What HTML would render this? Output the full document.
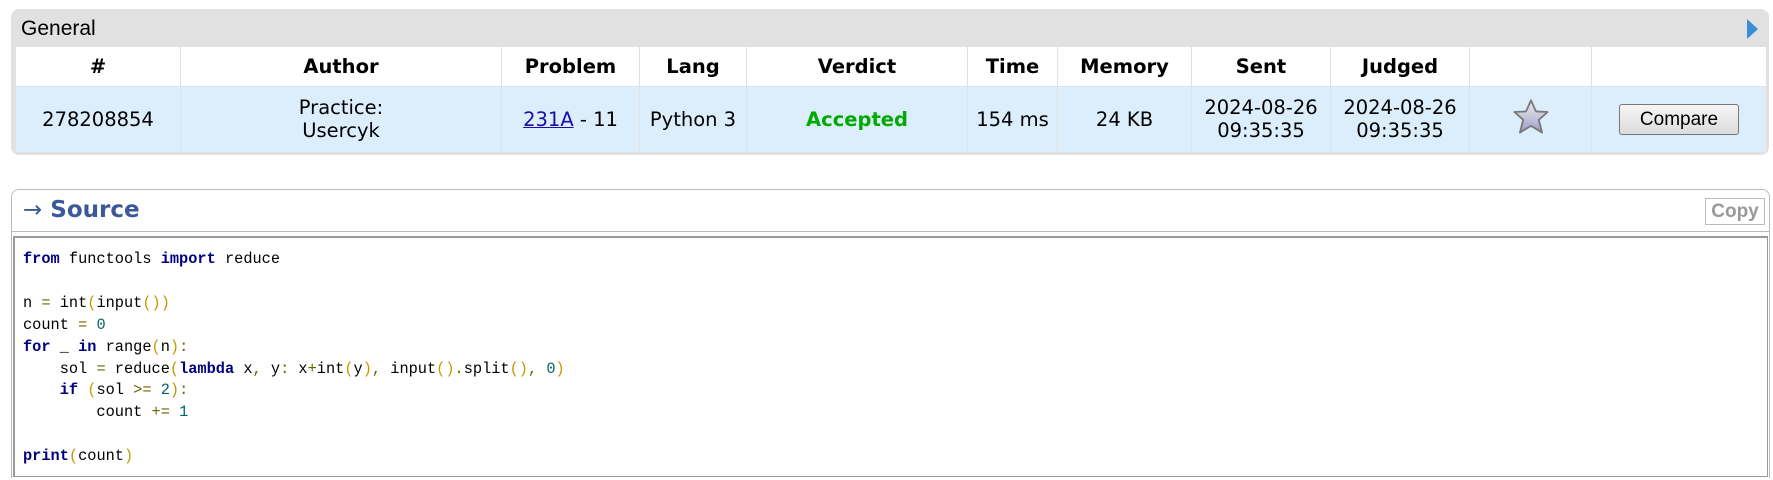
<!DOCTYPE html>
<html><head><meta charset="utf-8"><style>
*{margin:0;padding:0;box-sizing:border-box}
body{width:1773px;height:480px;background:#fff;position:relative;overflow:hidden;font-family:"DejaVu Sans",Verdana,sans-serif}
.box{position:absolute;left:11px;top:9px;width:1758px;height:146px;background:#e1e1e1;border-radius:8px}
.gen{position:absolute;left:10px;top:8px;font:21px "Liberation Sans",sans-serif;color:#000}
.tri{position:absolute;left:1736px;top:10px;width:0;height:0;border-top:10px solid transparent;border-bottom:10px solid transparent;border-left:11px solid #3a8fd8}
table{position:absolute;left:15px;top:47px;border-collapse:collapse;width:1752px;background:#fff;border-radius:6px 6px 0 0}
td,th{border-left:1px solid #e1e1e1;border-right:1px solid #e1e1e1;text-align:center;color:#000}
th{height:39px;font-weight:bold;font-size:19.5px;background:#fff}
td{height:66px;background:#dcedfc;font-size:19.5px;line-height:23px;border-top:1px solid #e1e1e1}
a{color:#1a0dab;text-decoration:underline}
.acc{color:#0a0;font-weight:bold}
.btn{display:inline-block;width:120px;height:31px;border:1px solid #777;border-radius:3px;background:linear-gradient(#f6f6f6,#dcdcdc);font:19px "Liberation Sans",sans-serif;line-height:29px}
.src{position:absolute;left:11px;top:189px;width:1759px;height:289px;border:1px solid #b9b9b9;border-radius:8px 8px 0 0;border-bottom:none}
.st{position:absolute;left:11px;top:7px;font-weight:bold;font-size:23px;color:#3b5998}
.st span{font-weight:normal}
.copy{position:absolute;left:1693px;top:8px;width:60px;height:27px;border:1px solid #bbb;font:bold 19px "Liberation Sans",sans-serif;color:#999;text-align:center;line-height:25px}
.hl{position:absolute;left:0;top:41px;width:100%;border-top:1px solid #b9b9b9}
pre{position:absolute;left:13px;top:236px;width:1755px;height:241px;border:1px solid #999;border-left:2px solid #999;border-top:2px solid #999;font:15.3px "Liberation Mono",monospace;line-height:21.9px;padding:11px 0 0 8px;color:#000}
.k{color:#000080;font-weight:bold}.o{color:#666600}.p{color:#c09a00}.n{color:#006666}
</style></head><body>
<div class="box"><div class="gen">General</div><div class="tri"></div></div>
<table>
<tr><th style="width:165px">#</th><th style="width:321px">Author</th><th style="width:138px">Problem</th><th style="width:107px">Lang</th><th style="width:221px">Verdict</th><th style="width:90px">Time</th><th style="width:134px">Memory</th><th style="width:139px">Sent</th><th style="width:139px">Judged</th><th style="width:122px"></th><th></th></tr>
<tr><td>278208854</td><td>Practice:<br>Usercyk</td><td><a>231A</a> - 11</td><td>Python 3</td><td><span class="acc">Accepted</span></td><td>154 ms</td><td>24 KB</td><td>2024-08-26<br>09:35:35</td><td>2024-08-26<br>09:35:35</td><td><svg width="40" height="38" viewBox="0 0 36 34"><defs><linearGradient id="g" x1="0" y1="0" x2="0" y2="1"><stop offset="0" stop-color="#e8e8ee"/><stop offset="0.5" stop-color="#c8c8da"/><stop offset="1" stop-color="#9a98cc"/></linearGradient></defs><path d="M18 2 L22.5 12 L33 12.5 L25 19.5 L28 31 L18 25 L8 31 L11 19.5 L3 12.5 L13.5 12 Z" fill="url(#g)" stroke="#777" stroke-width="1.6" stroke-linejoin="round"/></svg></td><td><span class="btn">Compare</span></td></tr>
</table>
<div class="src"><div class="st"><span>→</span> Source</div><div class="copy">Copy</div><div class="hl"></div></div>
<pre><span class="k">from</span> functools <span class="k">import</span> reduce

n <span class="o">=</span> int<span class="p">(</span>input<span class="p">())</span>
count <span class="o">=</span> <span class="n">0</span>
<span class="k">for</span> _ <span class="k">in</span> range<span class="p">(</span>n<span class="p">)</span><span class="o">:</span>
    sol <span class="o">=</span> reduce<span class="p">(</span><span class="k">lambda</span> x<span class="o">,</span> y<span class="o">:</span> x<span class="o">+</span>int<span class="p">(</span>y<span class="p">)</span><span class="o">,</span> input<span class="p">()</span><span class="o">.</span>split<span class="p">()</span><span class="o">,</span> <span class="n">0</span><span class="p">)</span>
    <span class="k">if</span> <span class="p">(</span>sol <span class="o">&gt;=</span> <span class="n">2</span><span class="p">)</span><span class="o">:</span>
        count <span class="o">+=</span> <span class="n">1</span>

<span class="k">print</span><span class="p">(</span>count<span class="p">)</span></pre>
</body></html>
